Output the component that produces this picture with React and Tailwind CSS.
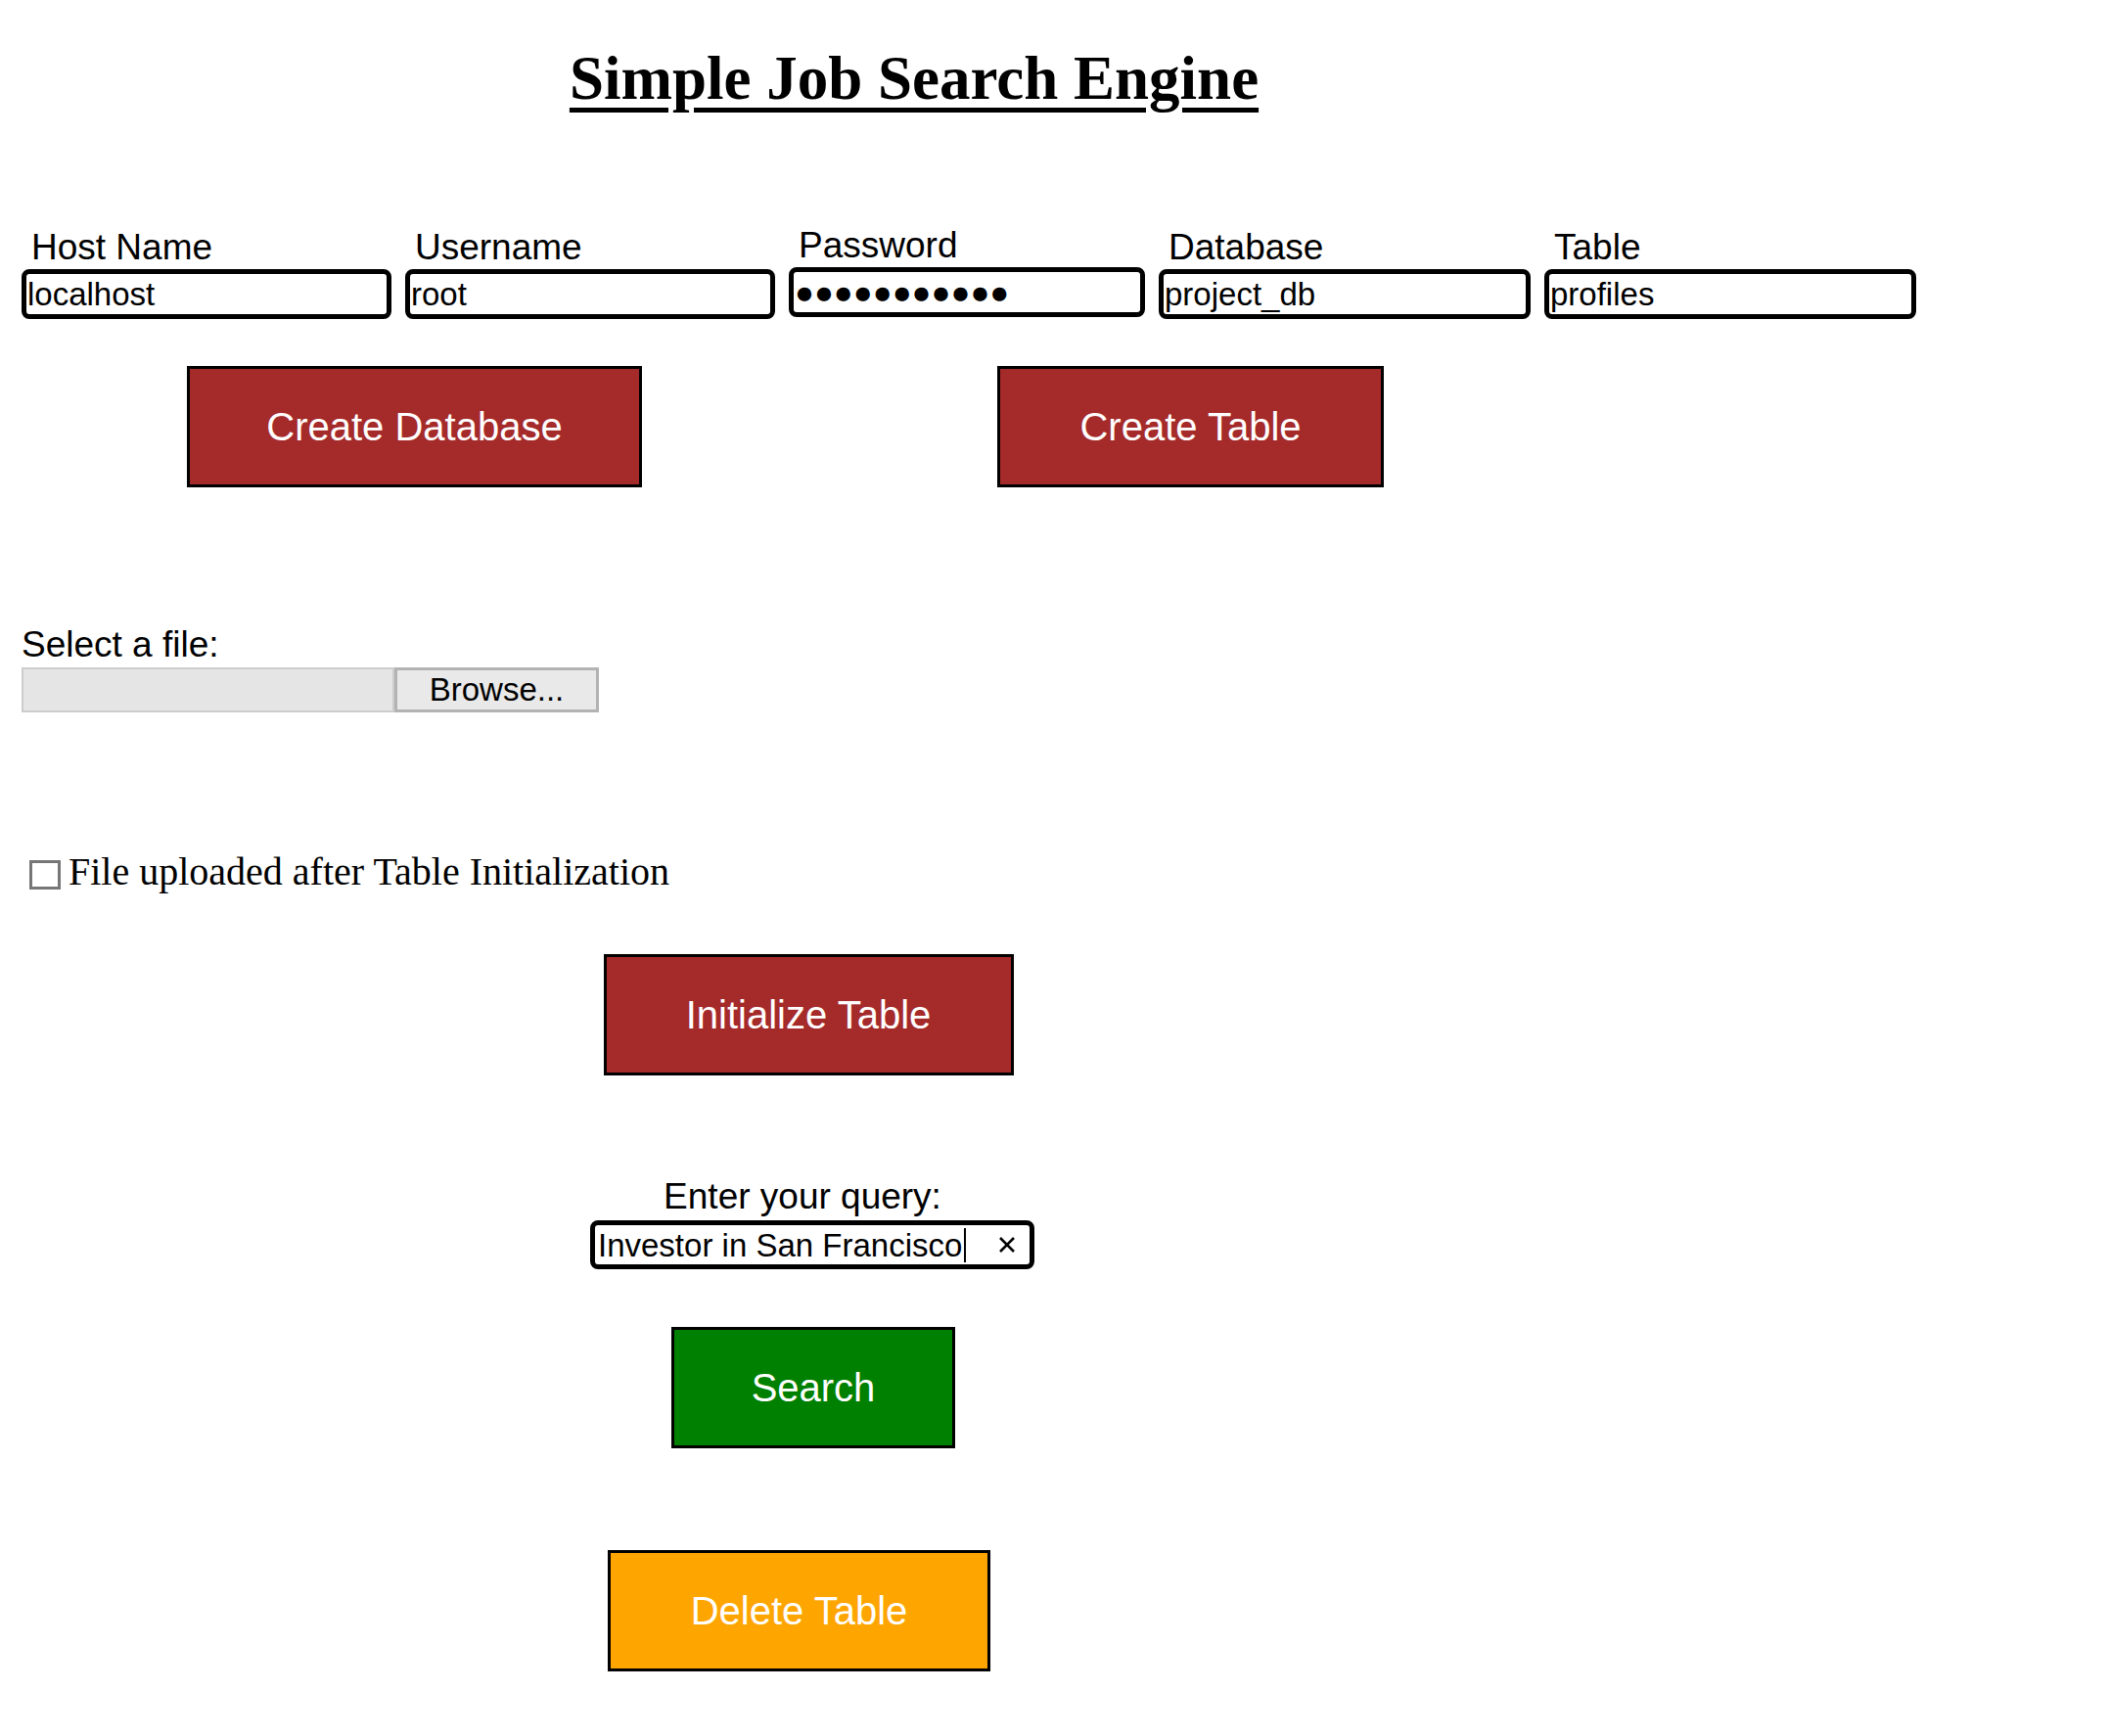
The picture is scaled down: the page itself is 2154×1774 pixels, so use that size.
import React from 'react';

const sans = "font-['Liberation_Sans',Arial,sans-serif]";
const serif = "font-['Liberation_Serif','Times_New_Roman',serif]";

const fields = [
  { label: 'Host Name', value: 'localhost', w: 'w-[378px]' },
  { label: 'Username', value: 'root', w: 'w-[378px]' },
  { label: 'Password', value: '●●●●●●●●●●●', w: 'w-[364px]', raise: true },
  { label: 'Database', value: 'project_db', w: 'w-[380px]' },
  { label: 'Table', value: 'profiles', w: 'w-[380px]' },
];

const Field = ({ label, value, w, raise }) => (
  <div className={`flex flex-col ${w} ${raise ? 'mb-[2px]' : ''}`}>
    <label className="pl-[10px] text-[37px] leading-none text-black">{label}</label>
    <input
      readOnly
      value={value}
      className={`mt-[4px] h-[51px] w-full rounded-[8px] border-[5px] border-black bg-white px-[1px] text-[33px] text-black outline-none ${sans}`}
    />
  </div>
);

const Btn = ({ children, color, className = '' }) => (
  <button
    className={`flex h-[124px] items-center justify-center border-[3px] border-black text-[40px] text-white ${color} ${className}`}
  >
    {children}
  </button>
);

export default function App() {
  return (
    <div className={`min-h-screen bg-white pb-[66px] text-black ${sans}`}>
      {/* header */}
      <div className="w-[1868px] pt-[49px] text-center">
        <h1
          className={`inline-block text-[63px] font-bold leading-none underline decoration-[5px] underline-offset-[9px] ${serif}`}
        >
          Simple Job Search Engine
        </h1>
      </div>

      {/* connection fields */}
      <div className="mt-[120px] flex items-end gap-[14px] pl-[22px]">
        {fields.map((f) => (
          <Field key={f.label} {...f} />
        ))}
      </div>

      <div className="mt-[48px] flex">
        <Btn color="bg-[#a52a2a]" className="ml-[191px] w-[465px]">Create Database</Btn>
        <Btn color="bg-[#a52a2a]" className="ml-[363px] w-[395px]">Create Table</Btn>
      </div>

      {/* file picker */}
      <div className="mt-[142px] pl-[22px]">
        <div className="text-[37px] leading-none">Select a file:</div>
        <div className="mt-[5px] flex">
          <div className="h-[46px] w-[381px] border-2 border-[#cdcdcd] bg-[#e5e5e5]" />
          <div className="flex h-[46px] w-[209px] items-center justify-center border-[3px] border-[#b3b3b3] bg-[#e9e9e9] text-[33px]">
            Browse...
          </div>
        </div>
      </div>

      <div className="mt-[138px] flex items-start pl-[30px]">
        <div className="mt-[13px] h-[30px] w-[32px] border-[3px] border-[#767676] bg-white" />
        <span className={`ml-[8px] mt-[5px] text-[40px] leading-none ${serif}`}>
          File uploaded after Table Initialization
        </span>
      </div>

      {/* table + query */}
      <div className="flex w-[1660px] flex-col items-center">
        <Btn color="bg-[#a52a2a]" className="mt-[64px] mr-[8px] w-[419px]">Initialize Table</Btn>

        <div className="mt-[105px] mr-[20px] text-[37px] leading-none">Enter your query:</div>
        <div className="mt-[6px] flex h-[50px] w-[454px] items-center rounded-[8px] border-[5px] border-black bg-white pl-[3px] pr-[14px]">
          <span className="text-[33px] leading-none">Investor in San Francisco</span>
          <span className="ml-[2px] h-[35px] w-[2px] bg-black" />
          <span className="flex-1" />
          <svg width="18" height="18" viewBox="0 0 18 18" className="shrink-0">
            <path d="M2 2L16 16M16 2L2 16" stroke="black" strokeWidth="2.6" />
          </svg>
        </div>

        <Btn color="bg-[#008000]" className="mt-[59px] ml-[2px] w-[290px]">Search</Btn>
        <Btn color="bg-[#ffa500]" className="mt-[104px] mr-[27px] w-[391px]">Delete Table</Btn>
      </div>
    </div>
  );
}
